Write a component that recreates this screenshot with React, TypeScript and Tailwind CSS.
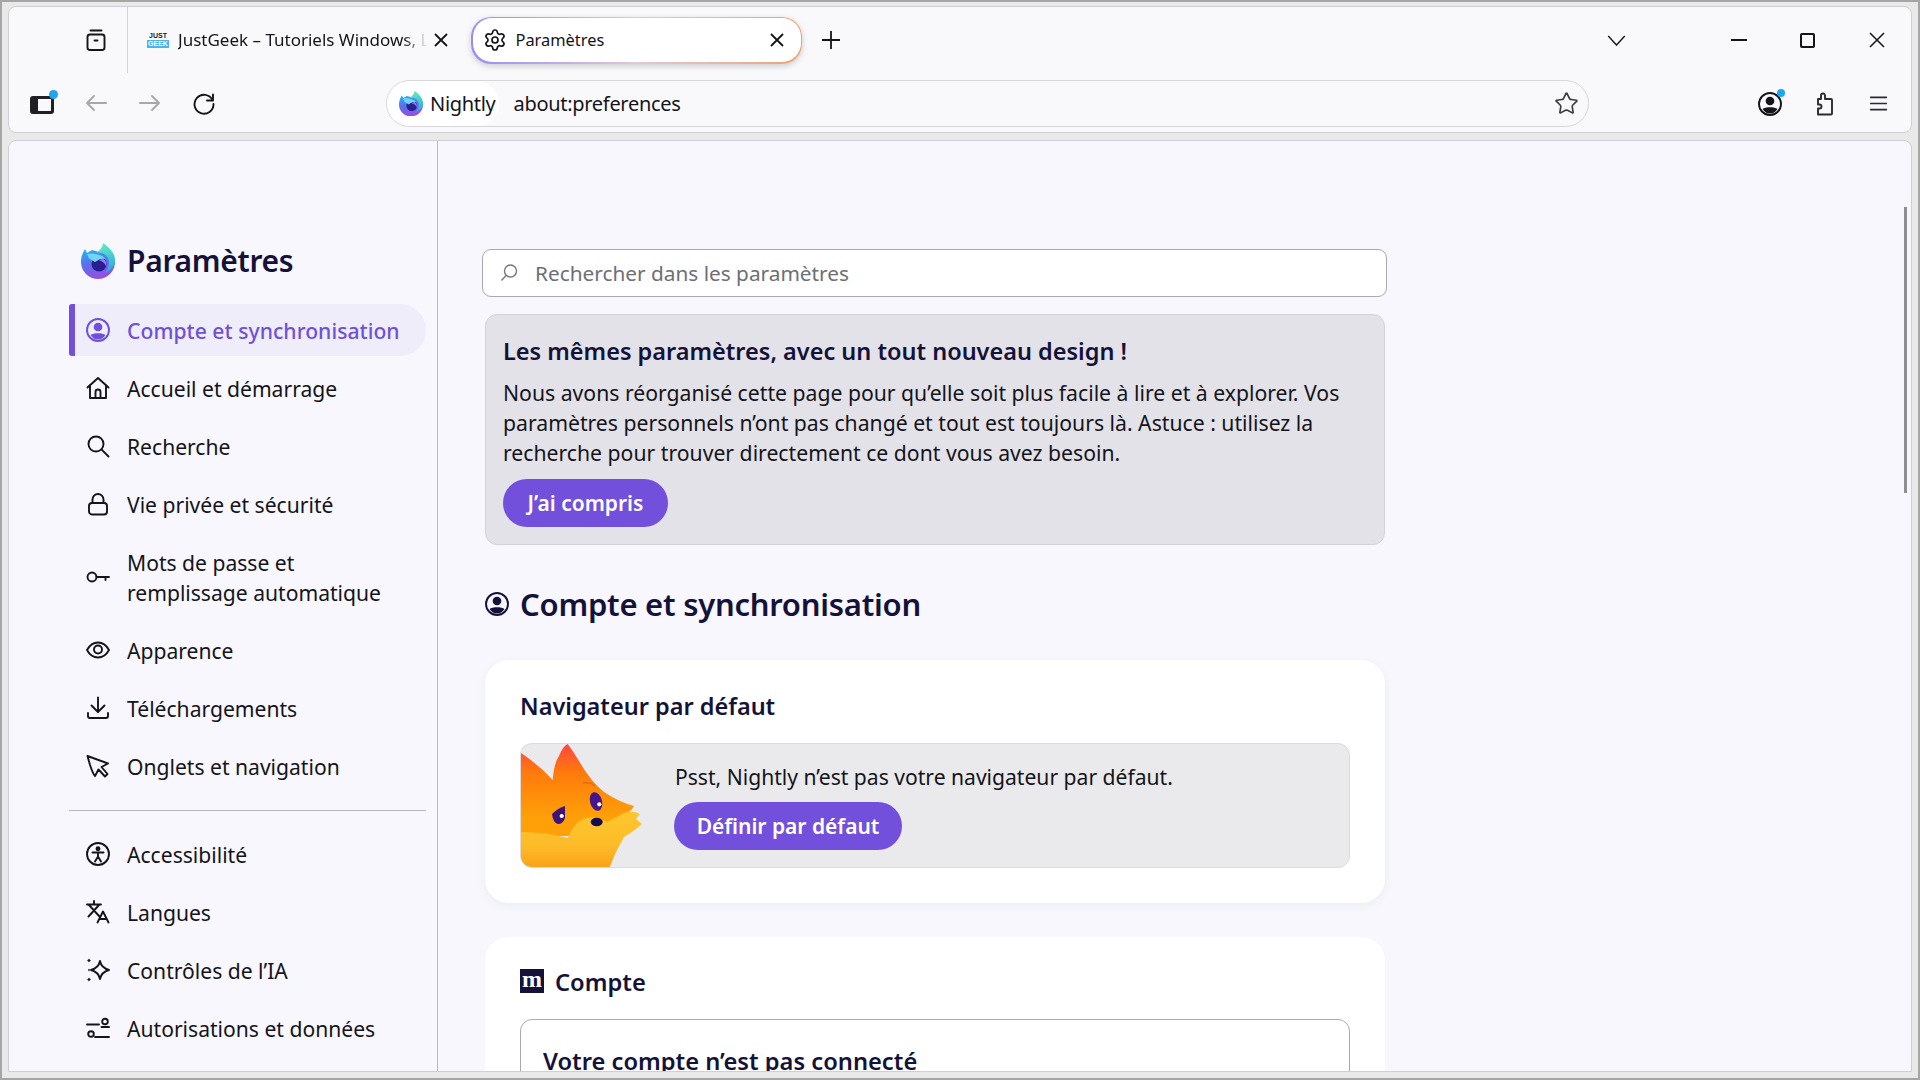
import React from "react";
import { Settings, Star } from "lucide-react";

const I = ({ children, className = "" }: { children: React.ReactNode; className?: string }) => (
  <svg viewBox="0 0 24 24" fill="none" stroke="currentColor" strokeWidth={1.9} strokeLinecap="round" strokeLinejoin="round" className={"w-6 h-6 shrink-0 " + className}>
    {children}
  </svg>
);

const AccountIcon = ({ className = "" }: { className?: string }) => (
  <I className={className}>
    <circle cx="12" cy="12" r="11" />
    <circle cx="12" cy="9" r="3.4" fill="currentColor" />
    <path d="M4.5 17c3-2.500 12-2.500 15 0-2 3-4.500 4.500-7.500 4.500S6.500 20 4.500 17z" fill="currentColor" stroke="none" />
  </I>
);

const Logo = ({ size, id }: { size: number; id: string }) => (
  <svg viewBox="0 0 34 36" width={size} height={(size * 36) / 34} className="shrink-0">
    <defs>
      <linearGradient id={id + "a"} x1="0.3" y1="0" x2="0.55" y2="1">
        <stop offset="0" stopColor="#25b4f0" />
        <stop offset="0.45" stopColor="#5a70ec" />
        <stop offset="1" stopColor="#9a4de0" />
      </linearGradient>
      <linearGradient id={id + "b"} x1="0.4" y1="0" x2="0.6" y2="1">
        <stop offset="0" stopColor="#62ecc0" />
        <stop offset="1" stopColor="#2aa8e4" />
      </linearGradient>
    </defs>
    <path d="M4 6 L6 10 L11 7 L18 9 L30 12 C33 15 34 17 34 19 A17 17 0 0 1 0 19 C0 14 1.500 10 4 6 Z" fill={`url(#${id}a)`} />
    <path d="M22 0 C21.500 5 18 8 15 10 C22 8 28 13 28 20 C28 24 26 27 24 30 C30 27 34 23 34 17 C34 10 28 4 22 0 Z" fill={`url(#${id}b)`} />
    <circle cx="18" cy="21" r="7.500" fill="#2a1e90" />
    <path d="M6 11 C11 9.500 20 11 25 16 C21 15 18 16 14 19 L8 15.500 Z" fill="#74d4f8" />
    <path d="M22 15.500 C24.500 17 26 20 25 23 C23.500 19.500 21 18 18 17.500 Z" fill="#8f80f0" />
  </svg>
);

const Fox = () => (
  <svg viewBox="0 0 122 125" className="w-[122px] h-[125px] shrink-0">
    <defs>
      <linearGradient id="fx1" x1="0" y1="0" x2="0" y2="1">
        <stop offset="0" stopColor="#ff4440" />
        <stop offset="0.3" stopColor="#ff7a0c" />
        <stop offset="0.8" stopColor="#ffa008" />
      </linearGradient>
      <linearGradient id="fx2" x1="0" y1="0" x2="0" y2="1">
        <stop offset="0" stopColor="#ffc62e" />
        <stop offset="0.6" stopColor="#fdbb28" />
        <stop offset="1" stopColor="#f9a018" />
      </linearGradient>
    </defs>
    <path d="M0 9 Q18 21 31.700 36 Q33 19 38 12 Q42 2 46.700 0 Q52 7 58 17 Q70 38 83 48 Q98 58 113 62 Q110 68 102 71 L95 92 L0 92 Z" fill="url(#fx1)" />
    <path d="M0 88 Q25 88 47 94 Q50 82 62 75 Q74 71 86 78 Q94 74 103 69 Q112 66 119 70 L115 75 L121 80 Q112 88 103 93 Q94 108 88 125 L0 125 Z" fill="url(#fx2)" />
    <path d="M62 39 Q70 38 74 42" stroke="#e86a10" strokeWidth="1.500" fill="none" />
    <ellipse cx="75" cy="57.500" rx="6" ry="9.500" transform="rotate(-15 75 57.500)" fill="#46148c" />
    <circle cx="78.300" cy="60.300" r="2.100" fill="#fff" />
    <path d="M31 70 Q37 64 44 62 L44 74 Q42 80 37 80 Q32 79 31 70 Z" fill="#3c1478" />
    <circle cx="40.700" cy="72" r="2.100" fill="#fff" />
    <ellipse cx="75.700" cy="78" rx="6" ry="4.200" fill="#160a50" />
  </svg>
);

const items: [string, React.ReactNode][] = [
  ["Accueil et démarrage", <I><path d="M1.500 11.500 12 2l10.500 9.500" /><path d="M4 9.500V22h16V9.500" /><path d="M9.500 22v-6a2.500 2.500 0 0 1 5 0v6" /></I>],
  ["Recherche", <I><circle cx="10" cy="10" r="7.500" /><path d="M15.700 15.700 22.500 22.500" /></I>],
  ["Vie privée et sécurité", <I><rect x="3" y="11" width="18" height="11.500" rx="3" /><path d="M6.500 11V7.500a5.500 5.500 0 0 1 11 0V11" /></I>],
];
const items2: [string, React.ReactNode][] = [
  ["Apparence", <I><path d="M1 12c3-5.500 7-7.500 11-7.500S20 6.500 23 12c-3 5.500-7 7.500-11 7.500S4 17.500 1 12z" /><circle cx="12" cy="11.500" r="4" /></I>],
  ["Téléchargements", <I><path d="M12 1.500V15.500" /><path d="M5.500 9.500 12 16l6.500-6.500" /><path d="M2 17v3a2 2 0 0 0 2 2h16a2 2 0 0 0 2-2v-3" /></I>],
  ["Onglets et navigation", <I><path d="M1.500 2 22 9.500 15.500 13 21.500 20 19 22.500 12.500 15.500 9 22 Q7 20 4 11 Z" /></I>],
];
const items3: [string, React.ReactNode][] = [
  ["Accessibilité", <I><circle cx="12" cy="12" r="11" /><circle cx="12" cy="6.800" r="1.500" fill="currentColor" /><path d="M6.500 10.500H17.500M12 10.500V14.500M12 14.500 9 19.500M12 14.500 15 19.500" /></I>],
  ["Langues", <I><path d="M1 4.500H15M8 1V4.500M3 5 13.500 16.500M13 5 2.500 16.500" /><path d="M11.500 22.500 17 11.500 22.500 22.500M13.500 19H20.500" /></I>],
  ["Contrôles de l’IA", <I><path d="M14 3c1 5 3.500 7.500 9 9-5.500 1.500-8 4-9 9-1-5-3.500-7.500-9-9 5.500-1.500 8-4 9-9z" /><path d="M3 1.500V3.500M2 2.500H4M3 20.500V22.500M2 21.500H4M3 11.500V12.500" strokeWidth={1.400} /></I>],
  ["Autorisations et données", <I><path d="M1 8.500H13M15.500 11H23M9 21H23" /><circle cx="19" cy="5.500" r="2.800" /><circle cx="5" cy="18" r="2.800" /></I>],
];

const NavItem = ({ label, icon }: { label: React.ReactNode; icon: React.ReactNode }) => (
  <div className="flex items-center gap-[17px] pl-[17px] py-[11px] text-[#15141a]">
    {icon}
    <span className="leading-[30px] translate-y-[1px]">{label}</span>
  </div>
);

export default function App() {
  return (
    <div className="w-[1920px] h-[1080px] overflow-hidden flex flex-col bg-[#e9e9e9] border-t-2 border-x-2 border-b-2 border-[#a6a6a6] px-[6px] pt-1 pb-[6px] text-[#15141a] font-['Noto_Sans',sans-serif]">
      {/* Browser toolbar */}
      <header className="h-[127px] shrink-0 rounded-lg border border-[#cfcfd8] bg-[#f9f9fb] flex flex-col">
        <div className="h-[66px] flex items-center relative">
          <div className="w-[119px] h-full border-r border-[#d4d4d8] pl-[75px] flex items-center">
            <I className="text-[#15141a]"><path d="M6.500 2.500H17.500" /><rect x="3.500" y="6.500" width="17" height="15.500" rx="2.500" /><path d="M10.500 12.500H13.500" /></I>
          </div>
          <div className="flex items-center w-[343px] pl-[19px]">
            <div className="w-[22px] h-[17px] flex flex-col items-center shrink-0 font-['Liberation_Sans',sans-serif] font-bold">
              <span className="text-[7px] leading-[8px] text-[#222]">JUST</span>
              <span className="text-[7px] leading-[8px] w-full text-center bg-[#4ab4ec] text-white">GEEK</span>
            </div>
            <span className="ml-[9px] w-[250px] text-[17px] whitespace-nowrap overflow-hidden [mask-image:linear-gradient(to_right,black_90%,transparent)]">JustGeek – Tutoriels Windows, Linux</span>
            <svg viewBox="0 0 14 14" className="w-3.5 h-3.5 ml-[6px] shrink-0" stroke="#15141a" strokeWidth="1.800"><path d="M1 1 13 13M13 1 1 13" /></svg>
          </div>
          <div className="w-[331px] h-[47px] rounded-[20px] p-[1.5px] bg-linear-to-r from-[#9a8cf0] via-[#e0c8d8] to-[#f0a070] shadow-[0_2px_6px_rgba(0,0,0,0.18)]">
            <div className="w-full h-full rounded-[19px] bg-white flex items-center pl-[10px] pr-[17px]">
              <Settings className="w-6 h-6 shrink-0" strokeWidth={1.700} />
              <span className="ml-[9px] text-[16.400px] flex-1">Paramètres</span>
              <svg viewBox="0 0 14 14" className="w-3.5 h-3.5 shrink-0" stroke="#15141a" strokeWidth="1.800"><path d="M1 1 13 13M13 1 1 13" /></svg>
            </div>
          </div>
          <svg viewBox="0 0 20 20" className="w-5 h-5 ml-[19px]" stroke="#15141a" strokeWidth="1.800"><path d="M10 1V19M1 10H19" /></svg>
          <div className="ml-auto flex items-center">
            <svg viewBox="0 0 20 12" className="w-[19px] h-[11px] mr-[105px]" fill="none" stroke="#15141a" strokeWidth="1.500"><path d="M1 1 10 11 19 1" /></svg>
            <div className="w-[16px] h-[2px] bg-[#15141a] mr-[53px]" />
            <div className="w-[15px] h-[15px] border-2 border-[#15141a] rounded-[2px] mr-[54px]" />
            <svg viewBox="0 0 16 16" className="w-4 h-4 mr-[26px]" stroke="#15141a" strokeWidth="1.500"><path d="M1 1 15 15M15 1 1 15" /></svg>
          </div>
        </div>
        <div className="flex-1 flex items-start pt-[7px] relative">
          <div className="w-[377px] h-[47px] flex items-center shrink-0 pl-[21px] -mt-[1px]">
            <div className="relative w-6 h-6">
              <div className="w-[24px] h-[18px] mt-[5px] border-y-[3px] border-r-[3px] border-l-[8px] border-[#1f1f24] rounded-[3px]" />
              <div className="absolute -top-[1px] -right-[4px] w-[9px] h-[9px] rounded-full bg-[#1aa7f0]" />
            </div>
            <I className="ml-[30px] text-[#a8a8ac]"><path d="M22 12H3M10 5 3 12l7 7" /></I>
            <I className="ml-[30px] text-[#a8a8ac]"><path d="M2 12h19M14 5l7 7-7 7" /></I>
            <I className="ml-[30px]"><path d="M21 3.500v6h-6" /><path d="M20.500 9A9.500 9.500 0 1 0 21.500 13" /></I>
          </div>
          <div className="w-[1203px] h-[47px] rounded-[24px] border border-[#d7d7db] bg-[#f9f9fb] flex items-center text-[20px] tracking-[-0.3px] shrink-0">
            <div className="h-full flex items-center rounded-full bg-white pl-[12px] pr-[3px] mr-[15px]">
              <Logo size={24} id="u" />
              <span className="ml-[7px]">Nightly</span>
            </div>
            <span>about:preferences</span>
            <Star className="w-[25px] h-[25px] ml-auto mr-[9px] text-[#3a3a40]" strokeWidth={1.600} />
          </div>
          <div className="flex items-center h-[47px] ml-[169px]">
            <div className="relative">
              <AccountIcon />
              <div className="absolute -top-[3px] -right-[3px] w-[8px] h-[8px] rounded-full bg-[#1aa7f0]" />
            </div>
            <I className="ml-[30px] text-[#2b2a33]"><path d="M13 3.500a2 2 0 0 0-4 0V7H6v5.500h1.500a2 2 0 0 1 0 4H6V22.500h13a1 1 0 0 0 1-1V8a1 1 0 0 0-1-1h-6z" /></I>
            <svg viewBox="0 0 20 16" className="w-[19px] h-[15px] ml-[33px]" stroke="#2b2a33" strokeWidth="1.800"><path d="M1 1.500H19M1 8H19M1 14.500H19" /></svg>
          </div>
        </div>
      </header>

      {/* Page */}
      <div className="mt-[7px] flex-1 min-h-0 rounded-t-lg border border-[#cfcfd8] bg-[#f7f7fd] flex overflow-hidden relative">
        <aside className="w-[429px] shrink-0 border-r border-[#b8b8be] pl-[60px] pr-[11px] pt-[102px] text-[21.100px]">
          <div className="flex items-center h-[36px] pl-[12px] gap-[12px]">
            <Logo size={34} id="s" />
            <span className="text-[30px] tracking-[-0.3px] leading-[36px] font-semibold text-[#15123a]">Paramètres</span>
          </div>
          <nav className="mt-[25px] flex flex-col gap-[6px]">
            <div className="relative flex items-center gap-[17px] pl-[17px] h-[52px] rounded-r-[26px] bg-[#f0edfb] text-[#6f50d8] font-medium">
              <div className="absolute left-0 top-0 bottom-0 w-[6px] rounded-l-[3px] bg-[#7250dc]" />
              <AccountIcon />
              <span className="translate-y-[1px] tracking-[0.05px]">Compte et synchronisation</span>
            </div>
            {items.map(([l, i]) => <NavItem key={l} label={l} icon={i} />)}
            <NavItem
              label={<>Mots de passe et<br />remplissage automatique</>}
              icon={<I><circle cx="6" cy="12" r="4.500" /><path d="M10.500 12H23M19.500 12V15" /></I>}
            />
            {items2.map(([l, i]) => <NavItem key={l} label={l} icon={i} />)}
            <div className="h-px bg-[#b8b8be] mt-[12px] mb-[11px]" />
            {items3.map(([l, i]) => <NavItem key={l} label={l} icon={i} />)}
          </nav>
        </aside>

        <main className="flex-1 min-w-0 pl-[44px] pt-[108px]">
          <div className="w-[905px] h-[48px] rounded-[9px] border border-[#a9a9b3] bg-white flex items-center pl-[17px] text-[20.800px] text-[#6e6e76]">
            <svg viewBox="0 0 18 18" fill="none" stroke="#77777e" strokeWidth="1.400" className="w-[18px] h-[18px]"><circle cx="10.500" cy="7" r="6" /><path d="M6 11.500 1.500 16.500" /></svg>
            <span className="ml-[17px] translate-y-[1px]">Rechercher dans les paramètres</span>
          </div>

          <section className="ml-[3px] w-[900px] mt-[17px] rounded-xl border border-[#d4d3da] bg-[#e3e2e9] pl-[17px] pr-[17px] pt-[21px] pb-[17px] h-[231px]">
            <h2 className="text-[23.500px] leading-[30px] font-semibold text-[#15123a]">Les mêmes paramètres, avec un tout nouveau design !</h2>
            <p className="mt-[12px] text-[21.200px] leading-[30px]">Nous avons réorganisé cette page pour qu’elle soit plus facile à lire et à explorer. Vos paramètres personnels n’ont pas changé et tout est toujours là. Astuce : utilisez la recherche pour trouver directement ce dont vous avez besoin.</p>
            <button className="mt-[11px] h-[48px] w-[165px] rounded-full bg-[#7250dc] text-white text-[21px] font-semibold pt-[2px]">J’ai compris</button>
          </section>

          <div className="ml-[3px] mt-[39px] flex items-center h-[40px] gap-[11px]">
            <AccountIcon className="text-[#15123a]" />
            <h1 className="text-[31px] tracking-[-0.25px] leading-[40px] font-semibold text-[#15123a]">Compte et synchronisation</h1>
          </div>

          <section className="ml-[3px] w-[900px] mt-[36px] h-[243px] rounded-[24px] bg-white shadow-[0_3px_10px_rgba(60,60,100,0.06)] px-[35px] pt-[31px]">
            <h3 className="text-[23.500px] leading-[30px] font-semibold text-[#15123a]">Navigateur par défaut</h3>
            <div className="mt-[22px] h-[125px] rounded-xl border border-[#dcdce0] bg-[#eaeaed] flex overflow-hidden">
              <Fox />
              <div className="ml-[31px] pt-[18px]">
                <p className="ml-[1px] text-[21.100px] leading-[30px]">Psst, Nightly n’est pas votre navigateur par défaut.</p>
                <button className="mt-[10px] h-[48px] w-[228px] rounded-full bg-[#7250dc] text-white text-[21px] font-semibold pt-[2px]">Définir par défaut</button>
              </div>
            </div>
          </section>

          <section className="ml-[3px] w-[900px] mt-[34px] rounded-[24px] bg-white px-[35px] pt-[30px] h-[300px]">
            <div className="flex items-center h-[30px] gap-[11px]">
              <div className="w-[24px] h-[24px] -mt-[2px] bg-[#15123a] text-white flex items-center justify-center font-['Liberation_Serif',serif] font-bold text-[24px] leading-[20px] overflow-hidden"><span className="-mt-[4px]">m</span></div>
              <h3 className="text-[23.700px] leading-[30px] font-semibold text-[#15123a]">Compte</h3>
            </div>
            <div className="mt-[22px] rounded-xl border border-[#a9a9b3] h-[200px] pl-[22px] pt-[25px]">
              <h4 className="text-[23.700px] leading-[32px] font-semibold text-[#15123a]">Votre compte n’est pas connecté</h4>
            </div>
          </section>
        </main>

        <div className="absolute top-[66px] right-[4px] w-[3px] h-[286px] bg-[#8f8f8f]" />
      </div>
    </div>
  );
}
